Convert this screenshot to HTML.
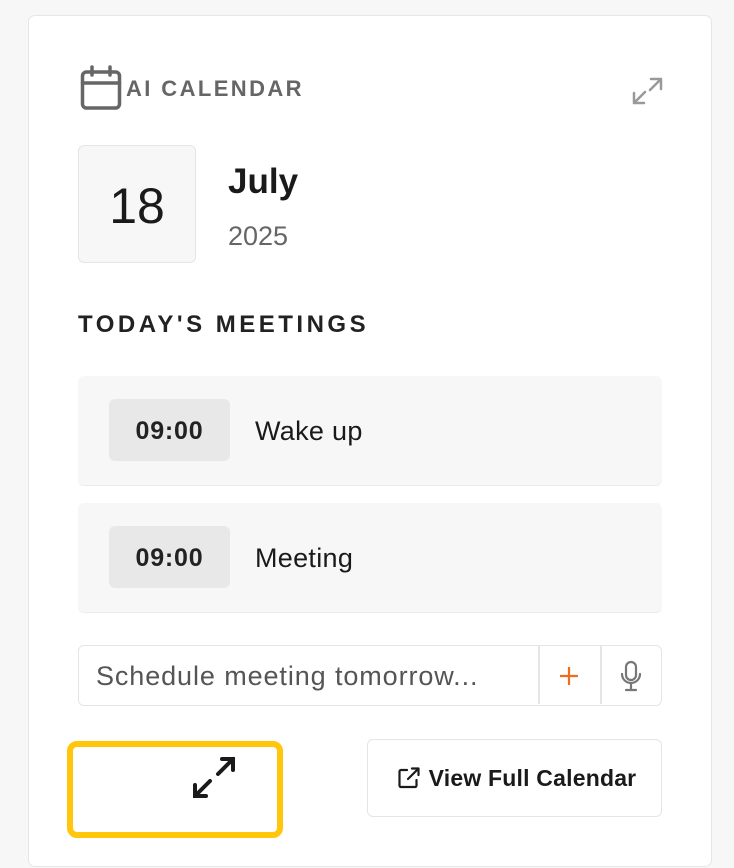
<!DOCTYPE html>
<html><head><style>
*{box-sizing:border-box;margin:0;padding:0}
body{width:734px;height:868px;background:#f7f7f7;font-family:"Liberation Sans",sans-serif;position:relative;overflow:hidden}
.card{position:absolute;left:28px;top:15px;width:684px;height:852px;background:#fff;border:1.5px solid #e6e6e6;border-radius:7px}
.abs{position:absolute}
.title{left:126px;top:76px;font-size:22px;font-weight:700;letter-spacing:2.4px;color:#666}
.datebox{left:78px;top:145px;width:118px;height:118px;background:#f7f7f7;border:1.5px solid #e5e5e5;border-radius:6px;font-size:50px;color:#1a1a1a;display:flex;align-items:center;justify-content:center;padding-top:3px}
.month{left:228px;top:162px;font-size:35px;font-weight:700;color:#1a1a1a}
.year{left:228px;top:221px;font-size:27px;color:#666}
.h{left:78px;top:311px;font-size:24px;font-weight:700;letter-spacing:3.5px;color:#222}
.row{left:78px;width:584px;height:110px;background:#f7f7f7;border-radius:6px;border-bottom:1.5px solid #ececec}
.chip{position:absolute;left:31px;top:23px;width:121px;height:62px;background:#e8e8e8;border-radius:6px;font-size:25px;font-weight:700;letter-spacing:.8px;color:#222;display:flex;align-items:center;justify-content:center;padding-top:2px}
.rt{position:absolute;left:177px;top:40px;font-size:27px;letter-spacing:.3px;color:#1a1a1a}
.input{left:78px;top:645px;width:584px;height:61px;border:1.5px solid #e5e5e5;border-radius:6px}
.btn{left:367px;top:739px;width:295px;height:78px;border:1.5px solid #e5e5e5;border-radius:6px;display:flex;align-items:center;justify-content:center;gap:8px;font-size:23px;font-weight:700;letter-spacing:.2px;color:#1a1a1a;padding-left:4px}
.yel{left:67px;top:741px;width:216px;height:97px;border:6px solid #ffc60a;border-radius:10px}
</style></head><body>
<div class="card"></div>
<svg class="abs" style="left:80px;top:65px" width="44" height="46" viewBox="0 0 44 46" fill="none" stroke="#666" stroke-width="3.5" stroke-linecap="round"><rect x="2.5" y="7" width="37" height="36" rx="4"/><line x1="2.5" y1="18" x2="39.5" y2="18"/><line x1="12" y1="2" x2="12" y2="10"/><line x1="30" y1="2" x2="30" y2="10"/></svg>
<div class="abs title">AI CALENDAR</div>
<svg class="abs" style="left:632px;top:77px" width="31" height="28" viewBox="0 0 31 28" fill="none" stroke="#999" stroke-width="2.5" stroke-linecap="round" stroke-linejoin="round"><path d="M19 2h10v10M29 2L18 13M12 26H2V16M2 26l11-11"/></svg>
<div class="abs datebox">18</div>
<div class="abs month">July</div>
<div class="abs year">2025</div>
<div class="abs h">TODAY'S MEETINGS</div>
<div class="abs row" style="top:376px"><div class="chip">09:00</div><div class="rt">Wake up</div></div>
<div class="abs row" style="top:503px"><div class="chip">09:00</div><div class="rt">Meeting</div></div>
<div class="abs input">
<div class="abs" style="left:17px;top:15px;font-size:27px;letter-spacing:.9px;color:#555">Schedule meeting tomorrow...</div>
<div class="abs" style="left:459px;top:0;width:1.5px;height:58px;background:#e5e5e5"></div>
<div class="abs" style="left:521px;top:0;width:1.5px;height:58px;background:#e5e5e5"></div>
<svg class="abs" style="left:480px;top:20px" width="20" height="20" viewBox="0 0 20 20" stroke="#f26b1d" stroke-width="2.2"><path d="M10 1v18M1 10h18"/></svg>
<svg class="abs" style="left:541px;top:14px" width="22" height="32" viewBox="0 0 22 32" fill="none" stroke="#777" stroke-width="2.2" stroke-linecap="round"><rect x="6" y="2" width="10" height="18" rx="5"/><path d="M2 14a9 9 0 0 0 18 0M11 23v6M6 30h10"/></svg>
</div>
<div class="abs yel"></div>
<svg class="abs" style="left:192px;top:756px" width="44" height="43" viewBox="0 0 44 43" fill="none" stroke="#1a1a1a" stroke-width="4" stroke-linecap="round" stroke-linejoin="square"><path d="M30 3h11v11M41 3L26 18M14 40H3V29M3 40l15-15"/></svg>
<div class="abs btn"><svg width="24" height="24" viewBox="0 0 24 24" fill="none" stroke="#1a1a1a" stroke-width="2.2" stroke-linecap="round" stroke-linejoin="round"><path d="M10 4H4a1.5 1.5 0 0 0-1.5 1.5v14A1.5 1.5 0 0 0 4 21h14a1.5 1.5 0 0 0 1.5-1.5V14M15 2.5h6.5V9M21.5 2.5L11 13"/></svg><span>View Full Calendar</span></div>
</body></html>
